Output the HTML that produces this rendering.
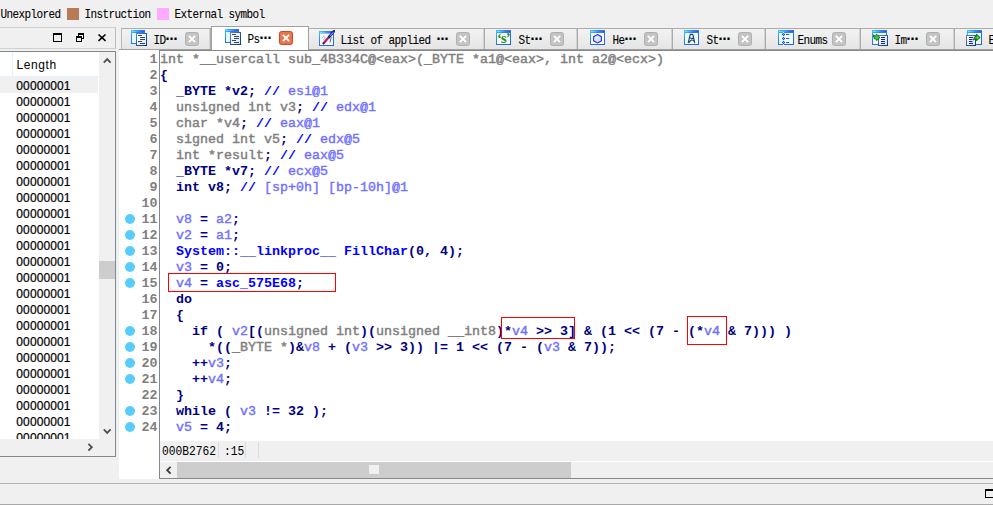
<!DOCTYPE html>
<html>
<head>
<meta charset="utf-8">
<title>IDA</title>
<style>
html,body{margin:0;padding:0;}
body{width:993px;height:505px;overflow:hidden;background:#f0f0f0;position:relative;font-family:"Liberation Sans",sans-serif;}
.abs{position:absolute;}
/* legend */
.sim{font-family:"Liberation Mono","DejaVu Sans Mono",monospace;font-size:11px;letter-spacing:-0.600px;line-height:12px;color:#000;white-space:pre;transform-origin:0 0;transform:scaleY(1.100);-webkit-text-stroke:0.080px #000;}
.dots{font-size:15px;line-height:0;letter-spacing:-5px;font-weight:bold;margin-left:-2.500px;position:relative;top:-1.400px;}
.sw{position:absolute;top:8px;width:12px;height:12px;}
/* left panel */
#ltitle{left:-1px;top:27px;width:117px;height:22px;border:1px solid #cfcfcf;border-right-color:#bebebe;box-sizing:border-box;background:#f0f0f0;}
#llist{left:-1px;top:51px;width:117px;height:406px;border:1px solid #828790;box-sizing:border-box;background:#fff;overflow:hidden;}
.row{-webkit-text-stroke:0.200px #000;position:absolute;left:16.300px;margin-top:1px;font-size:12px;line-height:16px;height:16px;color:#000;letter-spacing:0.120px;}
/* tabs */
.tab{position:absolute;top:28px;height:21px;box-sizing:border-box;border:1px solid #ababab;box-shadow:inset -1px 0 0 #d2d2d2;border-bottom:none;border-left:none;background:linear-gradient(#f3f3f3,#e5e5e5);}
.tab svg{position:absolute;top:2px;}
.tab .sim{position:absolute;top:4px;}
.cl{position:absolute;top:4px;width:14px;height:14px;box-sizing:border-box;border:1px solid #b0b0b0;border-radius:2.5px;background:#c4c4c4;}
.cl svg{position:absolute;left:0;top:0;}
#atab{top:26px;height:24px;border:1px solid #a0a0a0;border-bottom:none;background:#fff;box-shadow:none;}
#atab .cl{background:#e6764e;border-color:#d8402a;top:4px;}
/* code */
#code{left:119px;top:50px;width:874px;height:429px;background:#fff;}
.ln{position:absolute;left:0;margin-top:2px;width:38.500px;text-align:right;height:16px;line-height:16px;color:#808080;font-family:"Liberation Mono",monospace;font-size:13.333px;font-weight:bold;white-space:pre;}
.dot{position:absolute;left:6px;width:10px;height:10px;border-radius:50%;background:#58ccff;}
.cline{position:absolute;left:41px;margin-top:2px;height:16px;line-height:16px;font-family:"Liberation Mono",monospace;font-size:13.333px;font-weight:bold;white-space:pre;color:#000080;}
.g{color:#808080;font-weight:normal;-webkit-text-stroke:0.450px #808080;}
.b{color:#0000ff;}
.p{color:#7070ff;font-weight:normal;-webkit-text-stroke:0.400px #7070ff;}
.st{transform-origin:0 50%;transform:scaleY(1.070);font-family:"Liberation Mono",monospace;font-size:11.25px;line-height:16px;color:#000;white-space:pre;}
.red{position:absolute;border:1px solid #ff0000;box-sizing:border-box;}
</style>
</head>
<body>
<svg width="0" height="0" style="position:absolute"><defs>
<linearGradient id="gw" x1="0" y1="0" x2="1" y2="1"><stop offset="0" stop-color="#40ccff"/><stop offset="0.350" stop-color="#2f7fe8"/><stop offset="1" stop-color="#2b5fd8"/></linearGradient>
<linearGradient id="gs" x1="0" y1="0" x2="1" y2="0"><stop offset="0" stop-color="#7aeaff"/><stop offset="0.600" stop-color="#3c8cf0"/><stop offset="1" stop-color="#3a4ae0"/></linearGradient>
<linearGradient id="gb" x1="0" y1="0" x2="1" y2="1"><stop offset="0" stop-color="#5c8cc4"/><stop offset="0.500" stop-color="#2a5a98"/><stop offset="1" stop-color="#143a6c"/></linearGradient>
<linearGradient id="gp" x1="0" y1="0" x2="1" y2="1"><stop offset="0" stop-color="#ffffff"/><stop offset="1" stop-color="#d4e6fb"/></linearGradient>
</defs></svg>
<!-- legend -->
<div class="abs sim" style="left:0.400px;top:8px;">Unexplored</div>
<div class="sw" style="left:67px;background:#b97a57;"></div>
<div class="abs sim" style="left:84.400px;top:8px;">Instruction</div>
<div class="sw" style="left:157px;background:#ffaaff;"></div>
<div class="abs sim" style="left:174.400px;top:8px;">External symbol</div>

<!-- left panel title bar -->
<div class="abs" id="ltitle">
<svg class="abs" style="left:53px;top:5px" width="54" height="10" viewBox="0 0 54 10">
<rect x="0.500" y="1" width="8" height="7.500" fill="none" stroke="#000" stroke-width="1"/><rect x="0" y="0" width="9" height="2" fill="#000"/>
<rect x="25.500" y="0.500" width="5" height="5" fill="none" stroke="#000"/><rect x="25" y="0" width="6" height="2" fill="#000"/>
<rect x="23.500" y="3.500" width="5" height="5" fill="#f0f0f0" stroke="#000"/><rect x="23" y="3" width="6" height="2" fill="#000"/>
<path d="M45.500 1.500 L52.500 7.900 M52.500 1.500 L45.500 7.900" stroke="#000" stroke-width="1.600" fill="none"/>
</svg>
</div>

<!-- left list -->
<div class="abs" id="llist"><div class="abs" style="left:0;top:-1px;">
<div class="abs" style="left:12px;top:1px;width:1px;height:24px;background:#e5f1fb;"></div>
<div class="abs" style="left:0;top:25px;width:99px;height:1px;background:#e5f1fb;"></div>
<div class="abs" style="left:16.500px;top:6px;font-size:12px;line-height:16px;color:#000;letter-spacing:0.600px;">Length</div>
<div class="abs" style="left:0;top:26px;width:98px;height:16px;background:#f0f0f0;"></div>
<div class="row" style="top:26px">00000001</div>
<div class="row" style="top:42px">00000001</div>
<div class="row" style="top:58px">00000001</div>
<div class="row" style="top:74px">00000001</div>
<div class="row" style="top:90px">00000001</div>
<div class="row" style="top:106px">00000001</div>
<div class="row" style="top:122px">00000001</div>
<div class="row" style="top:138px">00000001</div>
<div class="row" style="top:154px">00000001</div>
<div class="row" style="top:170px">00000001</div>
<div class="row" style="top:186px">00000001</div>
<div class="row" style="top:202px">00000001</div>
<div class="row" style="top:218px">00000001</div>
<div class="row" style="top:234px">00000001</div>
<div class="row" style="top:250px">00000001</div>
<div class="row" style="top:266px">00000001</div>
<div class="row" style="top:282px">00000001</div>
<div class="row" style="top:298px">00000001</div>
<div class="row" style="top:314px">00000001</div>
<div class="row" style="top:330px">00000001</div>
<div class="row" style="top:346px">00000001</div>
<div class="row" style="top:362px">00000001</div>
<div class="row" style="top:378px">00000001</div>
<!-- v scrollbar -->
<div class="abs" style="left:99px;top:0;width:17px;height:388px;background:#f0f0f0;"></div>
<div class="abs" style="left:99px;top:210px;width:16px;height:18px;background:#cdcdcd;"></div>
<svg class="abs" style="left:103px;top:6px" width="9" height="7" viewBox="0 0 9 7"><path d="M0.800 5.600 L4.200 2.200 L7.600 5.600" stroke="#505050" stroke-width="1.900" fill="none"/></svg>
<svg class="abs" style="left:103px;top:377px" width="9" height="7" viewBox="0 0 9 7"><path d="M0.800 1.400 L4.200 4.800 L7.600 1.400" stroke="#505050" stroke-width="1.900" fill="none"/></svg>
<!-- h scrollbar -->
<div class="abs" style="left:0;top:388px;width:116px;height:17px;background:#f0f0f0;"></div>
<svg class="abs" style="left:86.500px;top:392.400px" width="7" height="9" viewBox="0 0 7 9"><path d="M1.400 0.800 L4.800 4.200 L1.400 7.600" stroke="#505050" stroke-width="1.900" fill="none"/></svg>
</div></div>

<!-- tab strip -->
<div class="abs" style="left:119px;top:49px;width:874px;height:1px;background:#a0a0a0;"></div>
<div class="tab" style="border-left:1px solid #b9b9b9;left:121px;width:90px">
<svg style="left:9px;top:1px" width="16" height="16" viewBox="0 0 16 16"><rect x="0" y="0" width="14" height="14" fill="url(#gw)"/><rect x="1" y="1" width="12" height="1" fill="url(#gs)"/><rect x="1" y="3" width="12" height="10" fill="#e4f9ff"/><rect x="5.500" y="3.500" width="10" height="12" fill="url(#gp)" stroke="url(#gb)"/><path d="M7 5.500h4M9 7.500h5M9 9.500h5M7 11.500h4M9 13.500h5" stroke="#3c444c" stroke-width="1"/></svg>
<div class="sim" style="left:31.5px;top:5px">ID<span class="dots">···</span></div>
<div class="cl" style="left:63px;top:3px"><svg width="12" height="12" viewBox="0 0 12 12"><path d="M2.900 2.900 L9.100 9.100 M9.100 2.900 L2.900 9.100" stroke="#fff" stroke-width="1.900" fill="none"/></svg></div>
</div>
<div class="tab" id="atab" style="left:211px;width:98px">
<svg style="left:13px;top:2px" width="16" height="16" viewBox="0 0 16 16"><rect x="0" y="0" width="14" height="14" fill="url(#gw)"/><rect x="1" y="1" width="12" height="1" fill="url(#gs)"/><rect x="1" y="3" width="12" height="10" fill="#e4f9ff"/><rect x="5.500" y="3.500" width="10" height="12" fill="url(#gp)" stroke="url(#gb)"/><path d="M7 5.500h4M9 7.500h5M9 9.500h5M7 11.500h4M9 13.500h5" stroke="#3c444c" stroke-width="1"/></svg>
<div class="sim" style="left:35.5px;top:6px">Ps<span class="dots">···</span></div>
<div class="cl" style="left:67px;top:4px"><svg width="12" height="12" viewBox="0 0 12 12"><path d="M2.900 2.900 L9.100 9.100 M9.100 2.900 L2.900 9.100" stroke="#fff" stroke-width="1.900" fill="none"/></svg></div>
</div>
<div class="tab" style="left:309px;width:176px">
<svg style="left:10px;top:1px" width="16" height="16" viewBox="0 0 16 16"><rect x="0" y="1" width="15" height="15" fill="url(#gw)"/><rect x="1" y="2" width="13" height="1" fill="url(#gs)"/><rect x="1" y="3.500" width="13" height="11.500" fill="#f1fbff"/><path d="M3.500 8.500c-0.500-2 2-3 2.500-1.500s-1 3-2 2.500" stroke="#b0b0b0" stroke-width="0.900" fill="none"/><path d="M12.300 7.200L11 12.500" stroke="#555" stroke-width="0.900"/><path d="M10.200 6.800L4.600 13.200" stroke="#c01868" stroke-width="2.300" stroke-linecap="round"/><path d="M4.900 12.900L4.300 13.700" stroke="#222" stroke-width="1.400" stroke-linecap="round"/><path d="M15 1.200L10.200 6.800" stroke="#1a2a9c" stroke-width="2.600" stroke-linecap="round"/><path d="M14.300 2.300L11.200 5.800" stroke="#c8d4ff" stroke-width="0.700"/></svg>
<div class="sim" style="left:31.5px;top:5px">List of applied <span class="dots">···</span></div>
<div class="cl" style="left:147px;top:3px"><svg width="12" height="12" viewBox="0 0 12 12"><path d="M2.900 2.900 L9.100 9.100 M9.100 2.900 L2.900 9.100" stroke="#fff" stroke-width="1.900" fill="none"/></svg></div>
</div>
<div class="tab" style="left:485px;width:93px">
<svg style="left:11px;top:1px" width="16" height="16" viewBox="0 0 16 16"><rect x="0" y="0" width="15" height="15" fill="url(#gw)"/><rect x="1" y="1" width="13" height="1" fill="url(#gs)"/><rect x="1" y="3" width="13" height="11" fill="#f3fdff"/><text x="7.400" y="13" font-family="Liberation Serif,serif" font-weight="bold" font-size="14.500" fill="#2f8a12" text-anchor="middle" letter-spacing="-0.800">‘s’</text></svg>
<div class="sim" style="left:33.5px;top:5px">St<span class="dots">···</span></div>
<div class="cl" style="left:65px;top:3px"><svg width="12" height="12" viewBox="0 0 12 12"><path d="M2.900 2.900 L9.100 9.100 M9.100 2.900 L2.900 9.100" stroke="#fff" stroke-width="1.900" fill="none"/></svg></div>
</div>
<div class="tab" style="left:578px;width:95px">
<svg style="left:12px;top:1px" width="16" height="16" viewBox="0 0 16 16"><rect x="0" y="0" width="15" height="15" fill="url(#gw)"/><rect x="1" y="1" width="13" height="1" fill="url(#gs)"/><rect x="1" y="3" width="13" height="11" fill="#f6fcff"/><path d="M7.500 4.600L11.400 6.700L11.400 10.800L7.500 12.900L3.600 10.800L3.600 6.700Z" fill="#dbe7fb" stroke="#2a2af2" stroke-width="1.100"/></svg>
<div class="sim" style="left:34.5px;top:5px">He<span class="dots">···</span></div>
<div class="cl" style="left:66px;top:3px"><svg width="12" height="12" viewBox="0 0 12 12"><path d="M2.900 2.900 L9.100 9.100 M9.100 2.900 L2.900 9.100" stroke="#fff" stroke-width="1.900" fill="none"/></svg></div>
</div>
<div class="tab" style="left:673px;width:93px">
<svg style="left:11px;top:1px" width="16" height="16" viewBox="0 0 16 16"><rect x="0" y="0" width="15" height="15" fill="url(#gw)"/><rect x="1" y="1" width="13" height="1" fill="url(#gs)"/><rect x="1" y="3" width="13" height="11" fill="#eefbff"/><path d="M4.300 12.700L6.100 4.700L8.900 4.700L10.700 12.700M9.300 7.600L5.300 12.200M6.500 7.800L9.600 10.800" stroke="#1b4170" stroke-width="1.150" fill="none" stroke-linecap="round"/><path d="M6 4.400h3" stroke="#1b4170" stroke-width="1.300"/><circle cx="7.500" cy="5.600" r="0.700" fill="#fff"/></svg>
<div class="sim" style="left:33.5px;top:5px">St<span class="dots">···</span></div>
<div class="cl" style="left:65px;top:3px"><svg width="12" height="12" viewBox="0 0 12 12"><path d="M2.900 2.900 L9.100 9.100 M9.100 2.900 L2.900 9.100" stroke="#fff" stroke-width="1.900" fill="none"/></svg></div>
</div>
<div class="tab" style="left:766px;width:95px">
<svg style="left:12px;top:1px" width="16" height="16" viewBox="0 0 16 16"><rect x="0" y="0" width="16" height="15" fill="url(#gw)"/><rect x="1" y="1" width="14" height="1" fill="url(#gs)"/><rect x="1" y="3" width="14" height="11" fill="#effcff"/><path d="M5.500 2v14" stroke="#fff" stroke-width="1"/><path d="M8 4.500h3.200M8 8.500h3.200M8 12.500h3.200" stroke="#2656d0" stroke-width="1.200"/><path d="M5.500 2.800l1.700 1.700l-1.700 1.700l-1.700-1.700zM5.500 6.800l1.700 1.700l-1.700 1.700l-1.700-1.700zM5.500 10.800l1.700 1.700l-1.700 1.700l-1.700-1.700z" fill="#1a40c0"/><path d="M5.500 3.700l0.800 0.800l-0.800 0.800l-0.800-0.800zM5.500 7.700l0.800 0.800l-0.800 0.800l-0.800-0.800zM5.500 11.700l0.800 0.800l-0.800 0.800l-0.800-0.800z" fill="#22e4ff"/></svg>
<div class="sim" style="left:31.5px;top:5px">Enums</div>
<div class="cl" style="left:66px;top:3px"><svg width="12" height="12" viewBox="0 0 12 12"><path d="M2.900 2.900 L9.100 9.100 M9.100 2.900 L2.900 9.100" stroke="#fff" stroke-width="1.900" fill="none"/></svg></div>
</div>
<div class="tab" style="left:861px;width:94px">
<svg style="left:11px;top:1px" width="16" height="16" viewBox="0 0 16 16"><rect x="0" y="0" width="15" height="15" fill="url(#gw)"/><rect x="1" y="1" width="13" height="1" fill="url(#gs)"/><rect x="1" y="3" width="13" height="11" fill="#f1fbff"/><rect x="6.500" y="5.500" width="9" height="10" fill="url(#gp)" stroke="url(#gb)"/><path d="M9 7.500h4M9 9.500h4M9 11.500h4M9 13.500h4" stroke="#1616b8" stroke-width="1.100"/><path d="M1.200 4.800L3.500 6.300L4.500 4.200L8 7.500L4.500 10.600L3.800 8.800L2.200 8.600Z" fill="#2fd42f" stroke="#0c5c0c" stroke-width="0.900" stroke-linejoin="round"/></svg>
<div class="sim" style="left:33.5px;top:5px">Im<span class="dots">···</span></div>
<div class="cl" style="left:65px;top:3px"><svg width="12" height="12" viewBox="0 0 12 12"><path d="M2.900 2.900 L9.100 9.100 M9.100 2.900 L2.900 9.100" stroke="#fff" stroke-width="1.900" fill="none"/></svg></div>
</div>
<div class="tab" style="left:955px;width:95px">
<svg style="left:11px;top:1px" width="16" height="16" viewBox="0 0 16 16"><rect x="1" y="0" width="15" height="15" fill="url(#gw)"/><rect x="2" y="1" width="13" height="1" fill="url(#gs)"/><rect x="2" y="3" width="13" height="11" fill="#f1fbff"/><rect x="0.500" y="5.500" width="9" height="10" fill="url(#gp)" stroke="url(#gb)"/><path d="M3 7.500h4M3 9.500h3.500M3 11.500h3.500M3 13.500h4" stroke="#1616b8" stroke-width="1.100"/><path d="M7.600 10L8.200 7.200L10.500 6.300L10.500 4.200L14.200 7.500L10.500 10.700L10.500 8.800L9 9Z" fill="#2fd42f" stroke="#0c5c0c" stroke-width="0.900" stroke-linejoin="round"/></svg>
<div class="sim" style="left:33.5px;top:5px">Ex<span class="dots">···</span></div>
<div class="cl" style="left:65px;top:3px"><svg width="12" height="12" viewBox="0 0 12 12"><path d="M2.900 2.900 L9.100 9.100 M9.100 2.900 L2.900 9.100" stroke="#fff" stroke-width="1.900" fill="none"/></svg></div>
</div>

<!-- code area -->
<div class="abs" id="code">
<div class="abs" style="left:40px;top:0;width:1px;height:429px;background:#828790;"></div>
<div class="abs" style="left:40px;top:0;width:834px;height:1px;background:#828790;"></div>
<div class="ln" style="top:0px">1</div>
<div class="cline" style="top:0px"><span class="g">int *__usercall sub_4B334C@&lt;eax&gt;(_BYTE *a1@&lt;eax&gt;, int a2@&lt;ecx&gt;)</span></div>
<div class="ln" style="top:16px">2</div>
<div class="cline" style="top:16px">{</div>
<div class="ln" style="top:32px">3</div>
<div class="cline" style="top:32px">  _BYTE *v2; <span class="b">// </span><span class="p">esi@1</span></div>
<div class="ln" style="top:48px">4</div>
<div class="cline" style="top:48px"><span class="g">  unsigned int v3</span>; <span class="b">// </span><span class="p">edx@1</span></div>
<div class="ln" style="top:64px">5</div>
<div class="cline" style="top:64px"><span class="g">  char *v4</span>; <span class="b">// </span><span class="p">eax@1</span></div>
<div class="ln" style="top:80px">6</div>
<div class="cline" style="top:80px"><span class="g">  signed int v5</span>; <span class="b">// </span><span class="p">edx@5</span></div>
<div class="ln" style="top:96px">7</div>
<div class="cline" style="top:96px"><span class="g">  int *result</span>; <span class="b">// </span><span class="p">eax@5</span></div>
<div class="ln" style="top:112px">8</div>
<div class="cline" style="top:112px">  _BYTE *v7; <span class="b">// </span><span class="p">ecx@5</span></div>
<div class="ln" style="top:128px">9</div>
<div class="cline" style="top:128px">  int v8; <span class="b">// </span><span class="p">[sp+0h] [bp-10h]@1</span></div>
<div class="ln" style="top:144px">10</div>
<div class="dot" style="top:163.7px"></div>
<div class="ln" style="top:160px">11</div>
<div class="cline" style="top:160px"><span class="p">  v8</span> = <span class="p">a2</span>;</div>
<div class="dot" style="top:179.7px"></div>
<div class="ln" style="top:176px">12</div>
<div class="cline" style="top:176px"><span class="p">  v2</span> = <span class="p">a1</span>;</div>
<div class="dot" style="top:195.7px"></div>
<div class="ln" style="top:192px">13</div>
<div class="cline" style="top:192px"><span class="b">  System::__linkproc__ FillChar</span>(0, 4);</div>
<div class="dot" style="top:211.7px"></div>
<div class="ln" style="top:208px">14</div>
<div class="cline" style="top:208px"><span class="p">  v3</span> = 0;</div>
<div class="dot" style="top:227.7px"></div>
<div class="ln" style="top:224px">15</div>
<div class="cline" style="top:224px"><span class="p">  v4</span> = <span class="b">asc_575E68</span>;</div>
<div class="ln" style="top:240px">16</div>
<div class="cline" style="top:240px">  do</div>
<div class="ln" style="top:256px">17</div>
<div class="cline" style="top:256px">  {</div>
<div class="dot" style="top:275.7px"></div>
<div class="ln" style="top:272px">18</div>
<div class="cline" style="top:272px">    if ( <span class="p">v2</span>[(<span class="g">unsigned int</span>)(<span class="g">unsigned __int8</span>)*<span class="p">v4</span> &gt;&gt; 3] &amp; (1 &lt;&lt; (7 - (*<span class="p">v4</span> &amp; 7))) )</div>
<div class="dot" style="top:291.7px"></div>
<div class="ln" style="top:288px">19</div>
<div class="cline" style="top:288px">      *((<span class="g">_BYTE *</span>)&amp;<span class="p">v8</span> + (<span class="p">v3</span> &gt;&gt; 3)) |= 1 &lt;&lt; (7 - (<span class="p">v3</span> &amp; 7));</div>
<div class="dot" style="top:307.7px"></div>
<div class="ln" style="top:304px">20</div>
<div class="cline" style="top:304px">    ++<span class="p">v3</span>;</div>
<div class="dot" style="top:323.7px"></div>
<div class="ln" style="top:320px">21</div>
<div class="cline" style="top:320px">    ++<span class="p">v4</span>;</div>
<div class="ln" style="top:336px">22</div>
<div class="cline" style="top:336px">  }</div>
<div class="dot" style="top:355.7px"></div>
<div class="ln" style="top:352px">23</div>
<div class="cline" style="top:352px">  while ( <span class="p">v3</span> != 32 );</div>
<div class="dot" style="top:371.7px"></div>
<div class="ln" style="top:368px">24</div>
<div class="cline" style="top:368px"><span class="p">  v5</span> = 4;</div>
<!-- status bar -->
<div class="abs" style="left:41px;top:391px;width:833px;height:20px;background:#f0f0f0;"></div>
<div class="abs" style="left:41px;top:411px;width:833px;height:1px;background:#fcfcfc;"></div>
<div class="abs" style="left:41px;top:412px;width:833px;height:16px;background:#f0f0f0;"></div>
<div class="abs" style="left:41px;top:428px;width:833px;height:1px;background:#828790;"></div>
<!-- status text -->
<div class="abs st" style="left:43px;top:393.600px;">000B2762</div>
<div class="abs" style="left:99px;top:392px;width:1px;height:16px;background:#dcdcdc;"></div>
<div class="abs st" style="left:105px;top:393.600px;">:15</div>
<div class="abs" style="left:126px;top:392px;width:1px;height:16px;background:#dcdcdc;"></div>
<div class="abs" style="left:139px;top:392px;width:1px;height:16px;background:#dcdcdc;"></div>
<!-- h scrollbar -->
<div class="abs" style="left:58px;top:412px;width:394px;height:16px;background:#cdcdcd;"></div>
<div class="abs" style="left:250px;top:415px;width:10px;height:9px;background:#f0f0f0;"></div>
<svg class="abs" style="left:46px;top:416px" width="7" height="9" viewBox="0 0 7 9"><path d="M5.600 0.800 L2.200 4.200 L5.600 7.600" stroke="#404040" stroke-width="1.900" fill="none"/></svg>
<!-- red boxes -->
<div class="red" style="left:49px;top:223px;width:168px;height:19px;"></div>
<div class="red" style="left:382px;top:267px;width:74px;height:22px;"></div>
<div class="red" style="left:568px;top:266px;width:40px;height:29px;"></div>
</div>

<!-- bottom lines -->
<div class="abs" style="left:0;top:483px;width:993px;height:1px;background:#b4b4b4;"></div>
<div class="abs" style="left:0;top:504px;width:993px;height:1px;background:#a8a8a8;"></div>
<div class="abs" style="left:985px;top:489px;width:9px;height:9px;box-sizing:border-box;border:1px solid #000;border-top-width:2px;"></div>
</body>
</html>
